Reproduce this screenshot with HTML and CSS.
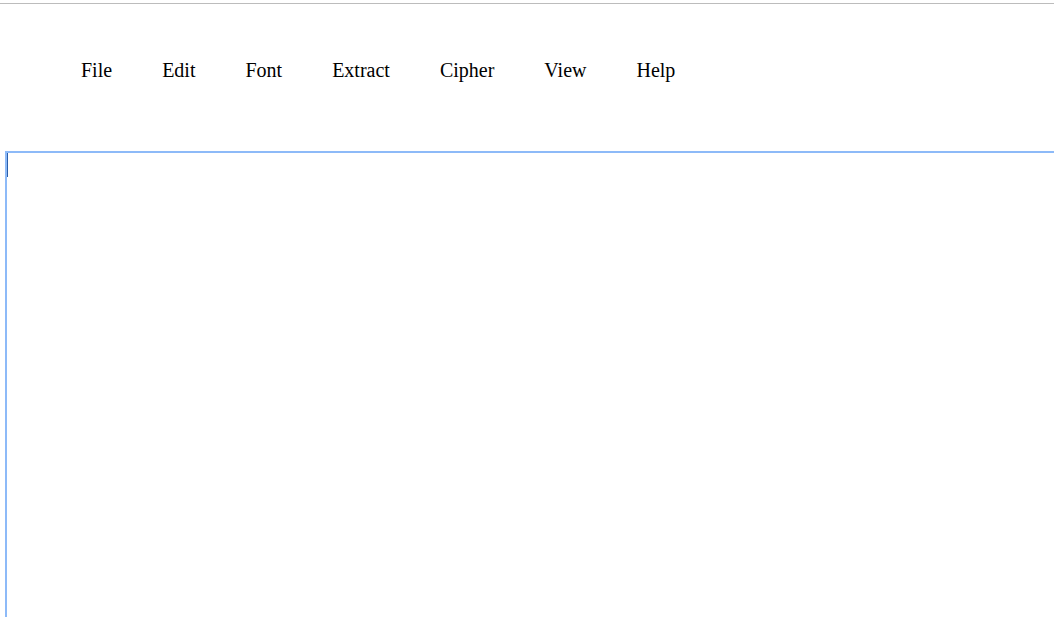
FILE: index.html
```html
<!DOCTYPE html>
<html>
<head>
<meta charset="utf-8">
<link rel="stylesheet" href="styles.css">
</head>
<body>
<div class="topline"></div>
<nav class="menu">
  <span class="item">File</span>
  <span class="item">Edit</span>
  <span class="item">Font</span>
  <span class="item">Extract</span>
  <span class="item">Cipher</span>
  <span class="item">View</span>
  <span class="item">Help</span>
</nav>
<div class="editor"><span class="caret"></span></div>
</body>
</html>
```
FILE: styles.css
```css
html, body {
  margin: 0;
  padding: 0;
  background: #ffffff;
  overflow: hidden;
}
body {
  width: 1054px;
  height: 617px;
  display: flex;
  flex-direction: column;
  font-family: "Liberation Serif", "Times New Roman", serif;
}
.topline {
  margin-top: 3px;
  height: 0;
  border-top: 1px solid #bcbcbc;
}
.menu {
  display: flex;
  gap: 50px;
  padding: 55px 0 0 81px;
  height: 147px;
  flex-shrink: 0;
  box-sizing: border-box;
  font-size: 20px;
  line-height: 23px;
  color: #000;
}
.editor {
  position: relative;
  flex: 1;
  margin-left: 5px;
  border-top: 2px solid #8dbaf8;
  border-left: 2px solid #8dbaf8;
}
.caret {
  position: absolute;
  left: 0;
  top: 0;
  width: 1px;
  height: 24px;
  background: #2b5ea9;
}
```
